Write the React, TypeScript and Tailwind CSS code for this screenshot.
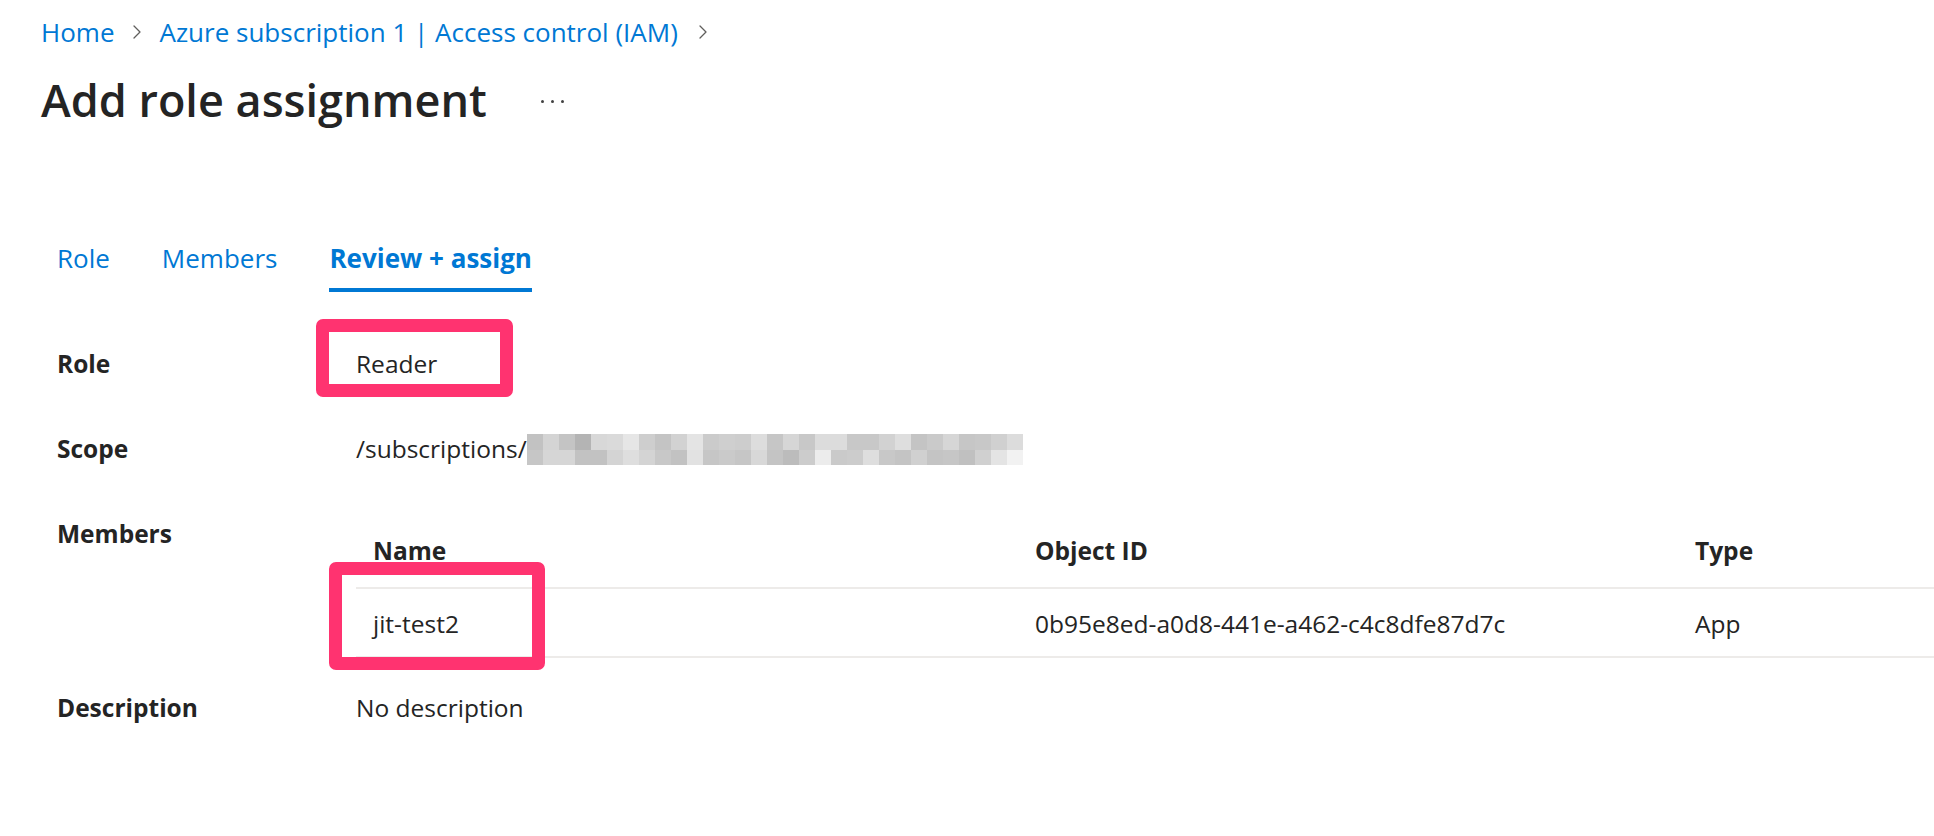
import React from "react";

const blurRows: string[][] = [
  ["#c2c2c2","#d4d4d4","#c4c4c4","#b4b4b4","#d8d8d8","#dadada","#e6e6e6","#cecece","#c4c4c4","#d2d2d2","#e4e4e4","#cbcbcb","#cfcfcf","#cdcdcd","#dddddd","#c6c6c6","#d6d6d6","#c8c8c8","#dcdcdc","#dcdcdc","#c8c8c8","#c8c8c8","#d2d2d2","#dedede","#c4c4c4","#cacaca","#d6d6d6","#c6c6c6","#c8c8c8","#d0d0d0","#dcdcdc"],
  ["#c6c6c6","#d6d6d6","#d6d6d6","#c2c2c2","#c2c2c2","#d4d4d4","#dedede","#d4d4d4","#c8c8c8","#c2c2c2","#e2e2e2","#c6c6c6","#cacaca","#c6c6c6","#d8d8d8","#c4c4c4","#bcbcbc","#cccccc","#ececec","#cacaca","#cccccc","#dedede","#c8c8c8","#c4c4c4","#d0d0d0","#c4c4c4","#c6c6c6","#c0c0c0","#d0d0d0","#e4e4e4","#f2f2f2"],
];

function Chevron() {
  return (
    <svg width="10" height="16" viewBox="0 0 10 16" fill="none" className="shrink-0">
      <path d="M2 2 L8 8 L2 14" stroke="#605e5c" strokeWidth="1.3" strokeLinecap="round" strokeLinejoin="round" />
    </svg>
  );
}

export default function App() {
  return (
    <div className="relative w-[1934px] h-[836px] overflow-hidden bg-white text-[#242424] font-['Open_Sans',sans-serif]">
      {/* Breadcrumb */}
      <div className="flex items-center pl-[41px] pt-[16px] h-[48px] text-[26px] leading-[32px] text-[#0078d4]">
        <span>Home</span>
        <span className="ml-[18px] mr-[17px] flex items-center"><Chevron /></span>
        <span>Azure subscription 1 | Access control (IAM)</span>
        <span className="ml-[20px] flex items-center"><Chevron /></span>
      </div>

      {/* Title */}
      <div className="flex items-center mt-[24px] pl-[41px] h-[56px]">
        <h1 className="text-[45px] leading-[56px] font-semibold text-[#242424]">Add role assignment</h1>
        <div className="ml-[54px] flex items-center gap-[7px] mt-[2px]">
          <span className="w-[3px] h-[3px] rounded-full bg-[#424242]" />
          <span className="w-[3px] h-[3px] rounded-full bg-[#424242]" />
          <span className="w-[3px] h-[3px] rounded-full bg-[#424242]" />
        </div>
      </div>

      {/* Tabs */}
      <div className="mt-[112px] pl-[57px] flex gap-[52px] text-[26px] leading-[36px] text-[#0078d4]">
        <div className="pb-[16px]">Role</div>
        <div className="pb-[16px]">Members</div>
        <div className="pb-[12px] border-b-4 border-[#0078d4] font-bold">Review + assign</div>
      </div>

      {/* Details */}
      <div className="pl-[57px] text-[24.5px] leading-[32px]">
        <div className="mt-[56px] flex">
          <div className="w-[299px] font-bold">Role</div>
          <div>Reader</div>
        </div>

        <div className="mt-[53px] flex">
          <div className="w-[299px] font-bold">Scope</div>
          <div className="flex items-start">
            <span>/subscriptions/</span>
            <div className="mt-[1px] flex flex-col">
              {blurRows.map((row, i) => (
                <div key={i} className="flex">
                  {row.map((c, j) => (
                    <div key={j} className="w-[16px] h-[15.5px]" style={{ background: c }} />
                  ))}
                </div>
              ))}
            </div>
          </div>
        </div>

        <div className="mt-[53px] flex">
          <div className="w-[299px] font-bold">Members</div>
          <div className="flex-1 flex flex-col">
            <div className="flex pt-[17px] pb-[20px] border-b-2 border-[#edebe9] font-bold">
              <div className="w-[662px] pl-[17px]">Name</div>
              <div className="w-[660px] pl-[17px]">Object ID</div>
              <div className="flex-1 pl-[17px]">Type</div>
            </div>
            <div className="flex pt-[19px] pb-[16px] border-b-2 border-[#edebe9]">
              <div className="w-[662px] pl-[17px]">jit-test2</div>
              <div className="w-[660px] pl-[17px]">0b95e8ed-a0d8-441e-a462-c4c8dfe87d7c</div>
              <div className="flex-1 pl-[17px]">App</div>
            </div>
          </div>
        </div>

        <div className="mt-[34px] flex">
          <div className="w-[299px] font-bold">Description</div>
          <div>No description</div>
        </div>
      </div>

      {/* Annotation boxes */}
      <div className="absolute left-[316px] top-[319px] w-[197px] h-[78px] border-[13px] border-[#ff3370] rounded-[7px]" />
      <div className="absolute left-[329px] top-[562px] w-[216px] h-[108px] border-[13px] border-[#ff3370] rounded-[7px]" />
    </div>
  );
}
